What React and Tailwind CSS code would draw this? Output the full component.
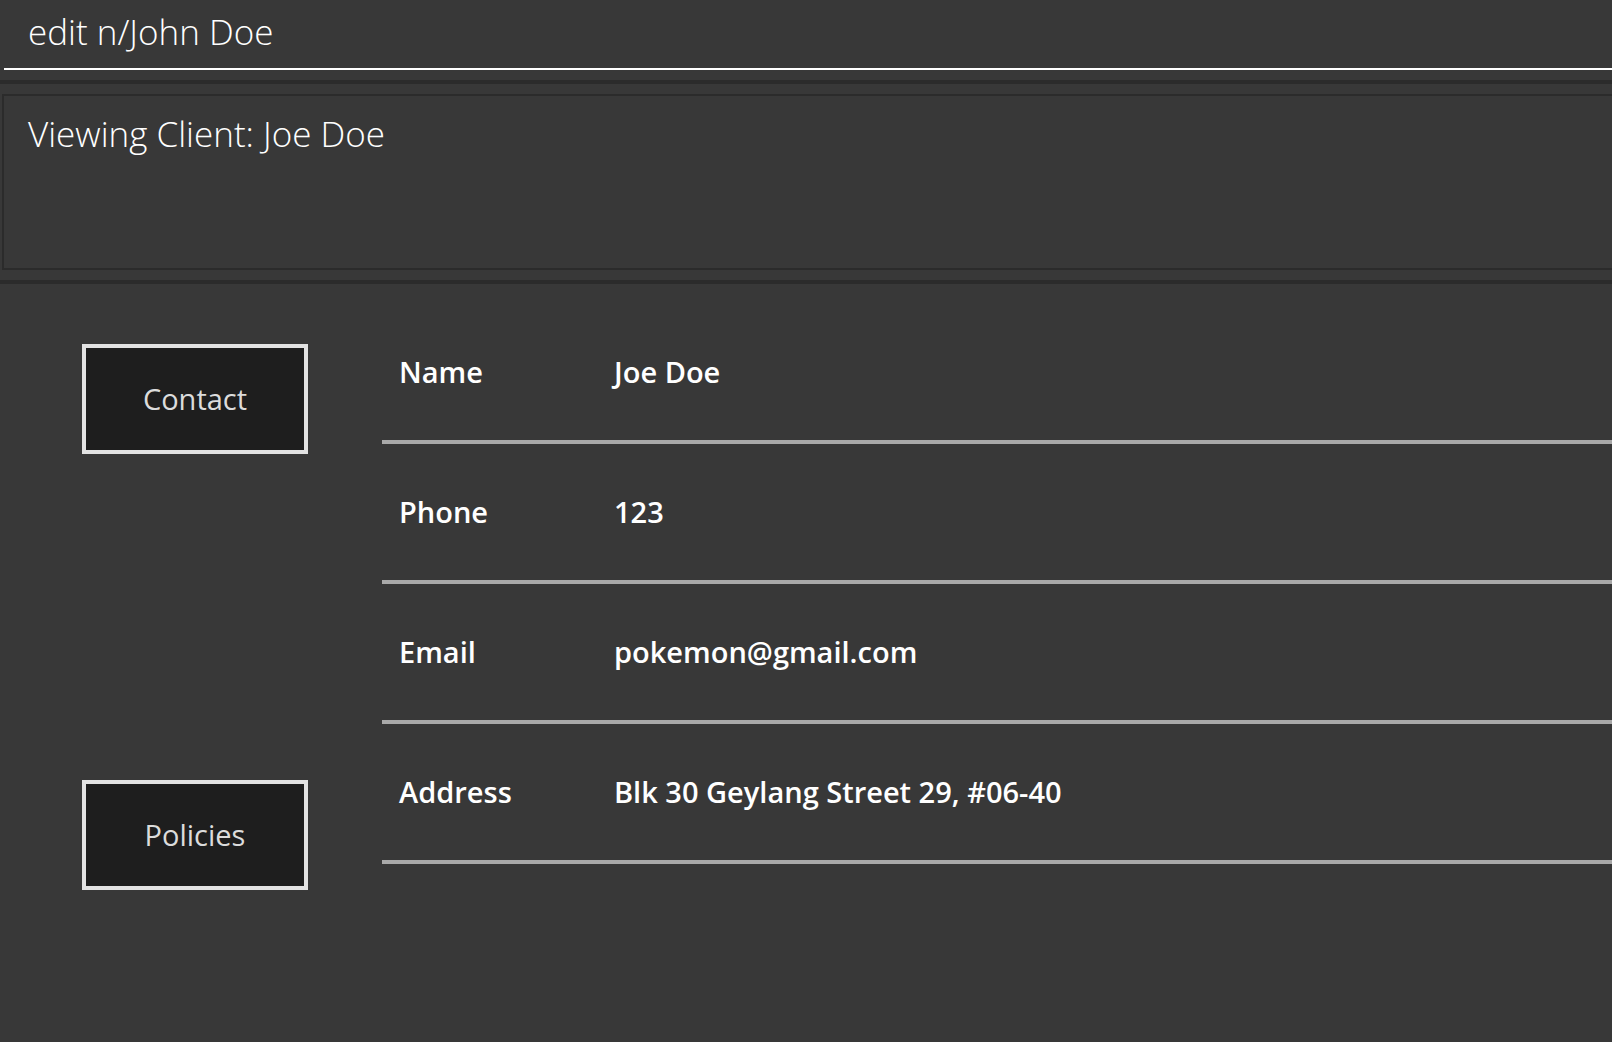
import React from "react";

const rows = [
  { label: "Name", value: "Joe Doe" },
  { label: "Phone", value: "123" },
  { label: "Email", value: "pokemon@gmail.com" },
  { label: "Address", value: "Blk 30 Geylang Street 29, #06-40" },
];

function SideButton({ children }) {
  return (
    <button
      type="button"
      className="w-[226px] h-[110px] border-4 border-[#e3e3e3] bg-[#1e1e1e] text-[#dcdcdc] text-[29px] leading-normal flex items-center justify-center"
    >
      {children}
    </button>
  );
}

export default function App() {
  return (
    <div
      className="min-h-[1042px] w-full bg-[#383838] overflow-hidden"
      style={{ fontFamily: '"Open Sans", "Noto Sans", sans-serif' }}
    >
      {/* command box */}
      <div className="ml-1 h-[70px] border-b-2 border-white">
        <div className="pl-[24px] pt-[6px] text-[35px] leading-normal font-light text-white">
          edit n/John Doe
        </div>
      </div>

      <div className="mt-[10px] h-[4px] bg-[#2b2b2b]" />

      {/* result display */}
      <div className="mt-[10px] ml-[2px] h-[176px] border-y-2 border-l-2 border-[#2b2b2b]">
        <div className="pl-[24px] pt-[12px] text-[35px] leading-normal font-light text-white">
          Viewing Client: Joe Doe
        </div>
      </div>

      <div className="mt-[10px] h-[4px] bg-[#2b2b2b]" />

      {/* client details */}
      <div className="flex">
        <div className="pl-[82px] pt-[60px] flex flex-col gap-[326px]">
          <SideButton>Contact</SideButton>
          <SideButton>Policies</SideButton>
        </div>

        <div className="ml-[74px] pt-[20px] flex-1 flex flex-col">
          {rows.map((r) => (
            <div
              key={r.label}
              className="h-[140px] border-b-4 border-[#a9a9a9] flex items-center text-[29px] leading-normal font-semibold text-white"
            >
              <span className="w-[232px] pl-[17px]">{r.label}</span>
              <span>{r.value}</span>
            </div>
          ))}
        </div>
      </div>
    </div>
  );
}
